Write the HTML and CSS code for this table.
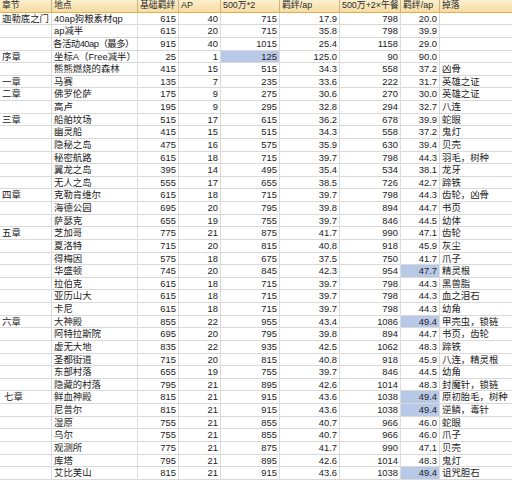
FILE: index.html
```html
<!DOCTYPE html>
<html lang="zh">
<head>
<meta charset="utf-8">
<title>羁绊表</title>
<link rel="stylesheet" href="styles.css">
</head>
<body>
<div class="sheet">
<div class="row head"><span>章节</span><span>地点</span><span>基础羁绊</span><span>AP</span><span>500万*2</span><span>羁绊/ap</span><span>500万+2×午餐</span><span>羁绊/ap</span><span>掉落</span></div>
<div class="row"><span>迦勒底之门</span><span>40ap狗粮素材qp</span><span class="n">615</span><span class="n">40</span><span class="n">715</span><span class="n">17.9</span><span class="n">798</span><span class="n">20.0</span><span></span></div>
<div class="row"><span></span><span>ap减半</span><span class="n">615</span><span class="n">20</span><span class="n">715</span><span class="n">35.8</span><span class="n">798</span><span class="n">39.9</span><span></span></div>
<div class="row"><span></span><span class="tight">各活动40ap（最多）</span><span class="n">915</span><span class="n">40</span><span class="n">1015</span><span class="n">25.4</span><span class="n">1158</span><span class="n">29.0</span><span></span></div>
<div class="row"><span>序章</span><span>坐标A（Free减半）</span><span class="n">25</span><span class="n">1</span><span class="n hl">125</span><span class="n">125.0</span><span class="n">90</span><span class="n">90.0</span><span></span></div>
<div class="row"><span></span><span>熊熊燃烧的森林</span><span class="n">415</span><span class="n">15</span><span class="n">515</span><span class="n">34.3</span><span class="n">558</span><span class="n">37.2</span><span>凶骨</span></div>
<div class="row"><span>一章</span><span>马赛</span><span class="n">135</span><span class="n">7</span><span class="n">235</span><span class="n">33.6</span><span class="n">222</span><span class="n">31.7</span><span>英雄之证</span></div>
<div class="row"><span>二章</span><span>佛罗伦萨</span><span class="n">175</span><span class="n">9</span><span class="n">275</span><span class="n">30.6</span><span class="n">270</span><span class="n">30.0</span><span>英雄之证</span></div>
<div class="row"><span></span><span>高卢</span><span class="n">195</span><span class="n">9</span><span class="n">295</span><span class="n">32.8</span><span class="n">294</span><span class="n">32.7</span><span>八连</span></div>
<div class="row"><span>三章</span><span>船舶坟场</span><span class="n">515</span><span class="n">17</span><span class="n">615</span><span class="n">36.2</span><span class="n">678</span><span class="n">39.9</span><span>蛇眼</span></div>
<div class="row"><span></span><span>幽灵船</span><span class="n">415</span><span class="n">15</span><span class="n">515</span><span class="n">34.3</span><span class="n">558</span><span class="n">37.2</span><span>鬼灯</span></div>
<div class="row"><span></span><span>隐秘之岛</span><span class="n">475</span><span class="n">16</span><span class="n">575</span><span class="n">35.9</span><span class="n">630</span><span class="n">39.4</span><span>贝壳</span></div>
<div class="row"><span></span><span>秘密航路</span><span class="n">615</span><span class="n">18</span><span class="n">715</span><span class="n">39.7</span><span class="n">798</span><span class="n">44.3</span><span>羽毛，树种</span></div>
<div class="row"><span></span><span>翼龙之岛</span><span class="n">395</span><span class="n">14</span><span class="n">495</span><span class="n">35.4</span><span class="n">534</span><span class="n">38.1</span><span>龙牙</span></div>
<div class="row"><span></span><span>无人之岛</span><span class="n">555</span><span class="n">17</span><span class="n">655</span><span class="n">38.5</span><span class="n">726</span><span class="n">42.7</span><span>蹄铁</span></div>
<div class="row"><span>四章</span><span>克勒肯维尔</span><span class="n">615</span><span class="n">18</span><span class="n">715</span><span class="n">39.7</span><span class="n">798</span><span class="n">44.3</span><span>齿轮，凶骨</span></div>
<div class="row"><span></span><span>海德公园</span><span class="n">695</span><span class="n">20</span><span class="n">795</span><span class="n">39.8</span><span class="n">894</span><span class="n">44.7</span><span>书页</span></div>
<div class="row"><span></span><span>萨瑟克</span><span class="n">655</span><span class="n">19</span><span class="n">755</span><span class="n">39.7</span><span class="n">846</span><span class="n">44.5</span><span>幼体</span></div>
<div class="row"><span>五章</span><span>芝加哥</span><span class="n">775</span><span class="n">21</span><span class="n">875</span><span class="n">41.7</span><span class="n">990</span><span class="n">47.1</span><span>齿轮</span></div>
<div class="row"><span></span><span>夏洛特</span><span class="n">715</span><span class="n">20</span><span class="n">815</span><span class="n">40.8</span><span class="n">918</span><span class="n">45.9</span><span>灰尘</span></div>
<div class="row"><span></span><span>得梅因</span><span class="n">575</span><span class="n">18</span><span class="n">675</span><span class="n">37.5</span><span class="n">750</span><span class="n">41.7</span><span>爪子</span></div>
<div class="row"><span></span><span>华盛顿</span><span class="n">745</span><span class="n">20</span><span class="n">845</span><span class="n">42.3</span><span class="n">954</span><span class="n hl">47.7</span><span>精灵根</span></div>
<div class="row"><span></span><span>拉伯克</span><span class="n">615</span><span class="n">18</span><span class="n">715</span><span class="n">39.7</span><span class="n">798</span><span class="n">44.3</span><span>黑兽脂</span></div>
<div class="row"><span></span><span>亚历山大</span><span class="n">615</span><span class="n">18</span><span class="n">715</span><span class="n">39.7</span><span class="n">798</span><span class="n">44.3</span><span>血之泪石</span></div>
<div class="row"><span></span><span>卡尼</span><span class="n">615</span><span class="n">18</span><span class="n">715</span><span class="n">39.7</span><span class="n">798</span><span class="n">44.3</span><span>幼角</span></div>
<div class="row"><span>六章</span><span>大神殿</span><span class="n">855</span><span class="n">22</span><span class="n">955</span><span class="n">43.4</span><span class="n">1086</span><span class="n hl">49.4</span><span>甲壳虫，锁链</span></div>
<div class="row"><span></span><span>阿特拉斯院</span><span class="n">695</span><span class="n">20</span><span class="n">795</span><span class="n">39.8</span><span class="n">894</span><span class="n">44.7</span><span>书页，齿轮</span></div>
<div class="row"><span></span><span>虚无大地</span><span class="n">835</span><span class="n">22</span><span class="n">935</span><span class="n">42.5</span><span class="n">1062</span><span class="n">48.3</span><span>蹄铁</span></div>
<div class="row"><span></span><span>圣都街道</span><span class="n">715</span><span class="n">20</span><span class="n">815</span><span class="n">40.8</span><span class="n">918</span><span class="n">45.9</span><span>八连，精灵根</span></div>
<div class="row"><span></span><span>东部村落</span><span class="n">655</span><span class="n">19</span><span class="n">755</span><span class="n">39.7</span><span class="n">846</span><span class="n">44.5</span><span>幼角</span></div>
<div class="row"><span></span><span>隐藏的村落</span><span class="n">795</span><span class="n">21</span><span class="n">895</span><span class="n">42.6</span><span class="n">1014</span><span class="n">48.3</span><span>封魔针，锁链</span></div>
<div class="row"><span class="ind">七章</span><span>鲜血神殿</span><span class="n">815</span><span class="n">21</span><span class="n">915</span><span class="n">43.6</span><span class="n">1038</span><span class="n hl">49.4</span><span>原初胎毛，树种</span></div>
<div class="row"><span></span><span>尼普尔</span><span class="n">815</span><span class="n">21</span><span class="n">915</span><span class="n">43.6</span><span class="n">1038</span><span class="n hl">49.4</span><span>逆鳞，毒针</span></div>
<div class="row"><span></span><span>湿原</span><span class="n">755</span><span class="n">21</span><span class="n">855</span><span class="n">40.7</span><span class="n">966</span><span class="n">46.0</span><span>蛇眼</span></div>
<div class="row"><span></span><span>乌尔</span><span class="n">755</span><span class="n">21</span><span class="n">855</span><span class="n">40.7</span><span class="n">966</span><span class="n">46.0</span><span>爪子</span></div>
<div class="row"><span></span><span>观测所</span><span class="n">775</span><span class="n">21</span><span class="n">875</span><span class="n">41.7</span><span class="n">990</span><span class="n">47.1</span><span>贝壳</span></div>
<div class="row"><span></span><span>库塔</span><span class="n">795</span><span class="n">21</span><span class="n">895</span><span class="n">42.6</span><span class="n">1014</span><span class="n">48.3</span><span>鬼灯</span></div>
<div class="row"><span></span><span>艾比芙山</span><span class="n">815</span><span class="n">21</span><span class="n">915</span><span class="n">43.6</span><span class="n">1038</span><span class="n hl">49.4</span><span>诅咒胆石</span></div>
</div>
</body>
</html>
```

FILE: styles.css
```css
html, body {
  margin: 0;
  padding: 0;
  background: #ffffff;
}
body {
  width: 512px;
  height: 480px;
  overflow: hidden;
  font-family: "Liberation Sans", "Noto Sans CJK SC", sans-serif;
  font-size: 9.4px;
  color: #222222;
}
.sheet {
  display: flex;
  flex-direction: column;
  width: 512px;
}
.row {
  display: grid;
  grid-template-columns: 52px 86px 41px 42px 59px 60px 61px 39px 72px;
  height: 12.63px;
  box-sizing: border-box;
  border-bottom: 1px solid #d9d9d9;
}
.row > span {
  display: block;
  padding: 0 1px 0 2px;
  line-height: 11.6px;
  white-space: nowrap;
  overflow: hidden;
  border-right: 1px solid #dcdcdc;
}
.row > span:last-child {
  border-right: none;
}
.head {
  background: linear-gradient(#fcefcf, #f6dca2);
  border-bottom: 1px solid #e3ae4f;
  font-size: 8.9px;
  color: #2a2a2a;
}
.head > span {
  border-right: 1px solid #c9b48a;
}
.row > .n {
  text-align: right;
  padding-right: 2px;
}
.row > .hl {
  background: #b8c9e8;
}
.row > .ind {
  padding-left: 4px;
}
.row > .tight {
  letter-spacing: -0.5px;
  padding-left: 1px;
}
```
